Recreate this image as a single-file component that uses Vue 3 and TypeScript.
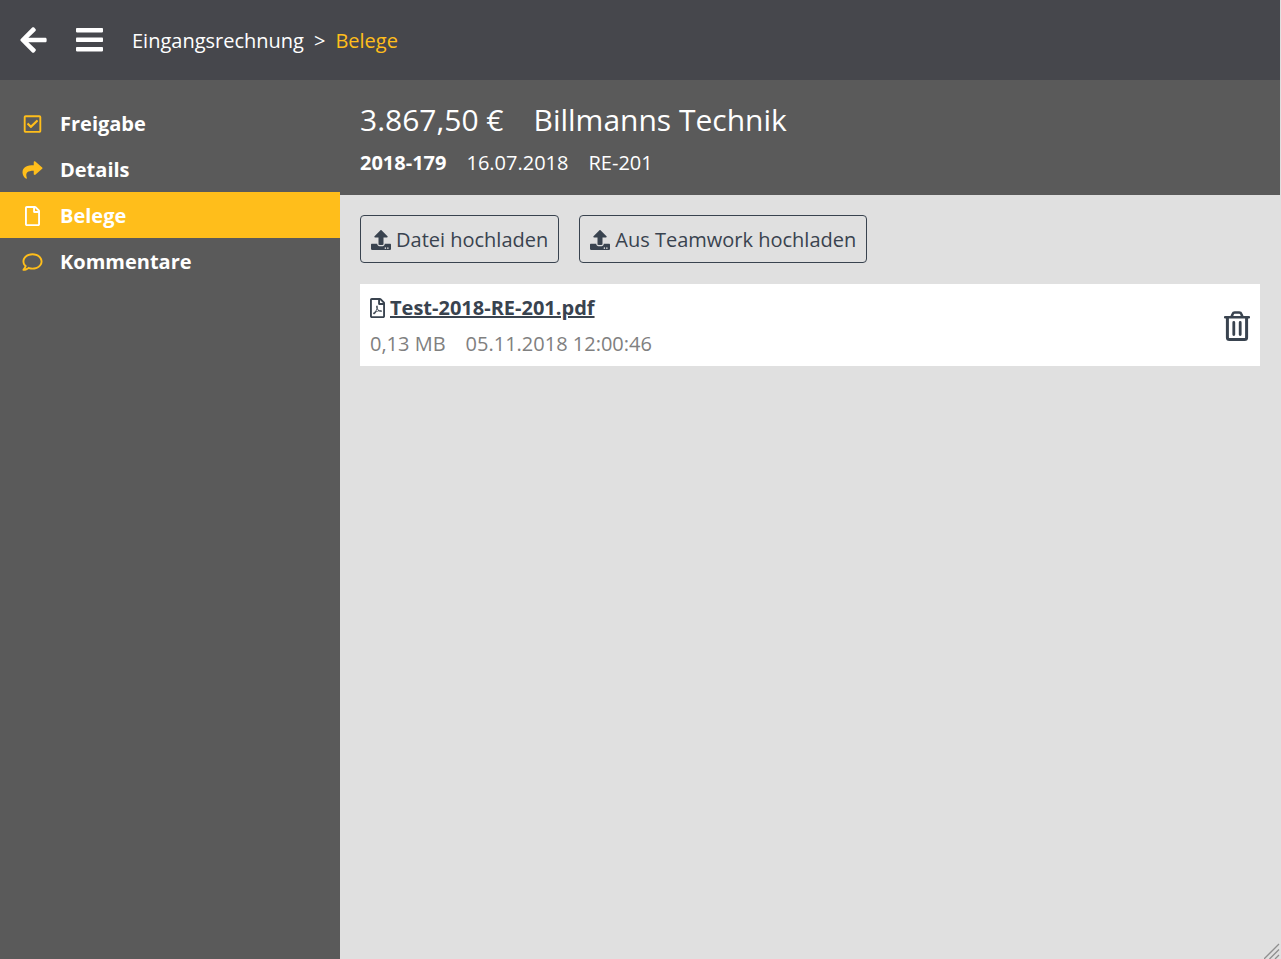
<script setup lang="ts">
import { ref } from 'vue'

interface NavItem {
  id: string
  label: string
  viewBox: string
  path: string
}

const navItems: NavItem[] = [
  {
    id: 'freigabe',
    label: 'Freigabe',
    viewBox: '0 0 448 512',
    path: 'M400 32H48C21.49 32 0 53.49 0 80v352c0 26.51 21.49 48 48 48h352c26.51 0 48-21.49 48-48V80c0-26.51-21.49-48-48-48zm0 400H48V80h352v352zm-35.864-241.724L191.547 361.48c-4.705 4.667-12.303 4.637-16.97-.068l-90.781-91.516c-4.667-4.705-4.637-12.303.069-16.971l22.719-22.536c4.705-4.667 12.303-4.637 16.97.069l59.792 60.277 141.352-140.216c4.705-4.667 12.303-4.637 16.97.068l22.536 22.718c4.667 4.706 4.637 12.304-.068 16.971z',
  },
  {
    id: 'details',
    label: 'Details',
    viewBox: '0 0 512 512',
    path: 'M503.691 189.836L327.687 37.851C312.281 24.546 288 35.347 288 56.015v80.053C127.371 137.907 0 170.1 0 322.326c0 61.441 39.581 122.309 83.333 154.132 13.653 9.931 33.111-2.533 28.077-18.631C66.066 312.814 132.917 274.316 288 272.085V360c0 20.7 24.3 31.453 39.687 18.164l176.004-152c11.071-9.562 11.086-26.753 0-36.328z',
  },
  {
    id: 'belege',
    label: 'Belege',
    viewBox: '0 0 384 512',
    path: 'M369.9 97.9L286 14C277 5 264.8-.1 252.1-.1H48C21.5 0 0 21.5 0 48v416c0 26.5 21.5 48 48 48h288c26.5 0 48-21.5 48-48V131.9c0-12.7-5.1-25-14.1-34zM332.1 128H256V51.9l76.1 76.1zM48 464V48h160v104c0 13.3 10.7 24 24 24h104v288H48z',
  },
  {
    id: 'kommentare',
    label: 'Kommentare',
    viewBox: '0 0 512 512',
    path: 'M256 32C114.6 32 0 125.1 0 240c0 47.6 19.9 91.2 52.9 126.3C38 405.7 7 439.1 6.5 439.5c-6.6 7-8.4 17.2-4.6 26S14.4 480 24 480c61.5 0 110-25.7 139.1-46.3C192 442.8 223.2 448 256 448c141.4 0 256-93.1 256-208S397.4 32 256 32zm0 368c-26.7 0-53.1-4.1-78.4-12.1l-22.7-7.2-19.5 13.8c-14.3 10.1-33.9 21.4-57.5 29 7.3-12.1 14.4-25.7 19.9-40.2l10.6-28.1-20.6-21.8C69.7 314.1 48 282.2 48 240c0-88.2 93.3-160 208-160s208 71.8 208 160-93.3 160-208 160z',
  },
]

const active = ref('belege')

const uploads: string[] = ['Datei hochladen', 'Aus Teamwork hochladen']

const files = ref([{ name: 'Test-2018-RE-201.pdf', size: '0,13 MB', date: '05.11.2018 12:00:46' }])

function removeFile(name: string) {
  files.value = files.value.filter((f) => f.name !== name)
}
</script>

<template>
  <div class="app">
    <header class="topbar">
      <button type="button" class="icon-button" aria-label="Zurück">
        <svg class="top-icon" viewBox="0 0 448 512" fill="currentColor">
          <path d="M257.5 445.1l-22.2 22.2c-9.4 9.4-24.6 9.4-33.9 0L7 273c-9.4-9.4-9.4-24.6 0-33.9L201.4 44.7c9.4-9.4 24.6-9.4 33.9 0l22.2 22.2c9.5 9.5 9.3 25-.4 34.3L136.6 216H424c13.3 0 24 10.7 24 24v32c0 13.3-10.7 24-24 24H136.6l120.5 114.8c9.8 9.3 10 24.8.4 34.3z" />
        </svg>
      </button>
      <button type="button" class="icon-button" aria-label="Menü">
        <svg class="top-icon" viewBox="0 0 27 30" fill="currentColor">
          <rect x="0" y="3" width="27" height="4.4" rx="0.8" />
          <rect x="0" y="12.6" width="27" height="4.4" rx="0.8" />
          <rect x="0" y="22" width="27" height="4.4" rx="0.8" />
        </svg>
      </button>
      <nav class="breadcrumb" aria-label="Pfad">
        <a href="#">Eingangsrechnung</a>
        <span>&gt;</span>
        <a href="#" class="current">Belege</a>
      </nav>
    </header>

    <div class="body">
      <nav class="sidebar" aria-label="Bereiche">
        <a
          v-for="item in navItems"
          :key="item.id"
          href="#"
          class="nav-item"
          :class="{ active: item.id === active }"
          @click.prevent="active = item.id"
        >
          <svg class="nav-icon" :viewBox="item.viewBox" fill="currentColor"><path :d="item.path" /></svg>
          <span>{{ item.label }}</span>
        </a>
      </nav>

      <main class="main">
        <section class="summary">
          <h1 class="title"><span>3.867,50 €</span><span>Billmanns Technik</span></h1>
          <p class="meta"><strong>2018-179</strong><span>16.07.2018</span><span>RE-201</span></p>
        </section>

        <section class="content">
          <div class="actions">
            <button v-for="label in uploads" :key="label" type="button" class="upload">
              <svg class="upload-icon" viewBox="0 0 512 512" fill="currentColor">
                <path d="M296 384h-80c-13.3 0-24-10.7-24-24V192h-87.7c-17.8 0-26.7-21.5-14.1-34.1L242.3 5.7c7.5-7.5 19.8-7.5 27.3 0l152.2 152.2c12.6 12.6 3.7 34.1-14.1 34.1H320v168c0 13.3-10.7 24-24 24zm216-8v112c0 13.3-10.7 24-24 24H24c-13.3 0-24-10.7-24-24V376c0-13.3 10.7-24 24-24h136v8c0 30.9 25.1 56 56 56h80c30.9 0 56-25.1 56-56v-8h136c13.3 0 24 10.7 24 24zm-124 88c0-11-9-20-20-20s-20 9-20 20 9 20 20 20 20-9 20-20zm64 0c0-11-9-20-20-20s-20 9-20 20 9 20 20 20 20-9 20-20z" />
              </svg>
              <span>{{ label }}</span>
            </button>
          </div>

          <article v-for="file in files" :key="file.name" class="file">
            <div class="file-text">
              <div class="file-name">
                <svg class="pdf-icon" viewBox="0 0 384 512" fill="currentColor">
                  <path d="M369.9 97.9L286 14C277 5 264.8-.1 252.1-.1H48C21.5 0 0 21.5 0 48v416c0 26.5 21.5 48 48 48h288c26.5 0 48-21.5 48-48V131.9c0-12.7-5.1-25-14.1-34zM332.1 128H256V51.9l76.1 76.1zM48 464V48h160v104c0 13.3 10.7 24 24 24h104v288H48zm250.2-143.7c-12.2-12-47-8.7-64.4-6.5-17.2-10.5-28.7-25-36.8-46.3 3.9-16.1 10.1-40.6 5.4-56-4.2-26.2-37.8-23.6-42.6-5.9-4.4 16.1-.4 38.5 7 67.1-10 23.9-24.9 56-35.4 74.4-20 10.3-47 26.2-51 46.2-3.3 15.8 26 55.2 76.1-31.2 22.4-7.4 46.8-16.5 68.4-20.1 18.9 10.2 41 17 55.8 17 25.5 0 28-28.2 17.5-38.7zm-198.1 77.8c5.1-13.7 24.5-29.5 30.4-35-19 30.3-30.4 35.7-30.4 35zm81.6-190.6c7.4 0 6.7 32.1 1.8 40.8-4.4-13.9-4.3-40.8-1.8-40.8zm-24.4 136.6c9.7-16.9 18-37 24.7-54.7 8.3 15.1 18.9 27.2 30.1 35.5-20.8 4.3-38.9 13.1-54.8 19.2zm131.6-5s-5 6-37.3-7.8c35.1-2.6 40.9 5.4 37.3 7.8z" />
                </svg>
                <a href="#">{{ file.name }}</a>
              </div>
              <div class="file-meta"><span>{{ file.size }}</span><span>{{ file.date }}</span></div>
            </div>
            <button type="button" class="icon-button trash" aria-label="Löschen" @click="removeFile(file.name)">
              <svg class="trash-icon" viewBox="0 0 26 30" fill="none" stroke="currentColor">
                <path d="M7.5 6L8.7 2.9Q9.2 1.5 10.7 1.5h4.6q1.5 0 2 1.4L18.5 6" stroke-width="2.6" />
                <path d="M1 6.2h24" stroke-width="2.4" stroke-linecap="round" />
                <path d="M3.4 6.5v20q0 2 2 2h15.2q2 0 2-2v-20" stroke-width="3" />
                <path d="M9.8 11.5v12M16.2 11.5v12" stroke-width="2.8" stroke-linecap="round" />
              </svg>
            </button>
          </article>
        </section>
      </main>
    </div>

    <svg class="grip" viewBox="0 0 16 16" fill="none" stroke="#8f8f8f" stroke-width="1.3" aria-hidden="true">
      <path d="M0 16L15 1M5.5 16L15 6.5M11 16L15 12" />
    </svg>
  </div>
</template>

<style>
body {
  margin: 0;
}
</style>

<style scoped>
.app {
  position: relative;
  display: flex;
  flex-direction: column;
  box-sizing: border-box;
  min-height: 100vh;
  border-right: 1px solid #e0e0e0;
  background: #e0e0e0;
  font-family: 'Open Sans', 'Noto Sans', sans-serif;
  font-size: 20px;
  line-height: 26px;
  color: #fff;
}

a {
  color: inherit;
  text-decoration: none;
}

button {
  font: inherit;
  cursor: pointer;
}

svg {
  display: block;
  flex: none;
}

.topbar {
  display: flex;
  align-items: center;
  height: 80px;
  padding: 0 20px;
  gap: 29px;
  background: #46474c;
}

.icon-button {
  padding: 0;
  border: 0;
  background: none;
  color: inherit;
}

.top-icon {
  width: 27px;
  height: 30px;
}

.breadcrumb {
  display: flex;
  gap: 10px;
  padding-top: 2px;
}

.current {
  color: #ffbe1b;
}

.body {
  display: flex;
  flex: 1;
}

.sidebar {
  flex: none;
  width: 340px;
  padding-top: 20px;
  background: #5a5a5a;
}

.nav-item {
  display: flex;
  align-items: center;
  gap: 17px;
  padding: 11px 22px 9px;
  font-weight: 700;
}

.nav-icon {
  width: 21px;
  height: 20px;
  color: #ffbe1b;
}

.active {
  background: #ffbe1b;
}

.active .nav-icon {
  color: #fff;
}

.main {
  flex: 1;
  min-width: 0;
}

.summary {
  padding: 20px 20px 19px;
  background: #5a5a5a;
}

.title {
  display: flex;
  gap: 30px;
  margin: 0 0 10px;
  font-size: 30px;
  font-weight: 400;
  line-height: 40px;
}

.meta {
  display: flex;
  gap: 20px;
  margin: 0;
}

.content {
  padding: 20px;
  color: #39434f;
}

.actions {
  display: flex;
  gap: 20px;
  margin-bottom: 21px;
}

.upload {
  display: flex;
  align-items: center;
  gap: 5px;
  padding: 11px 10px 9px;
  border: 1px solid #39434f;
  border-radius: 4px;
  background: none;
  color: inherit;
}

.upload-icon {
  width: 20px;
  height: 20px;
}

.file {
  display: flex;
  align-items: center;
  justify-content: space-between;
  padding: 11px 10px 9px;
  background: #fff;
}

.file-name {
  display: flex;
  align-items: center;
  gap: 5px;
  margin-bottom: 10px;
  font-weight: 700;
}

.file-name a {
  text-decoration: underline;
}

.pdf-icon {
  width: 15px;
  height: 20px;
}

.file-meta {
  display: flex;
  gap: 20px;
  color: #808080;
}

.trash-icon {
  width: 26px;
  height: 30px;
}

.grip {
  position: absolute;
  right: 0;
  bottom: 0;
  width: 16px;
  height: 16px;
}
</style>
